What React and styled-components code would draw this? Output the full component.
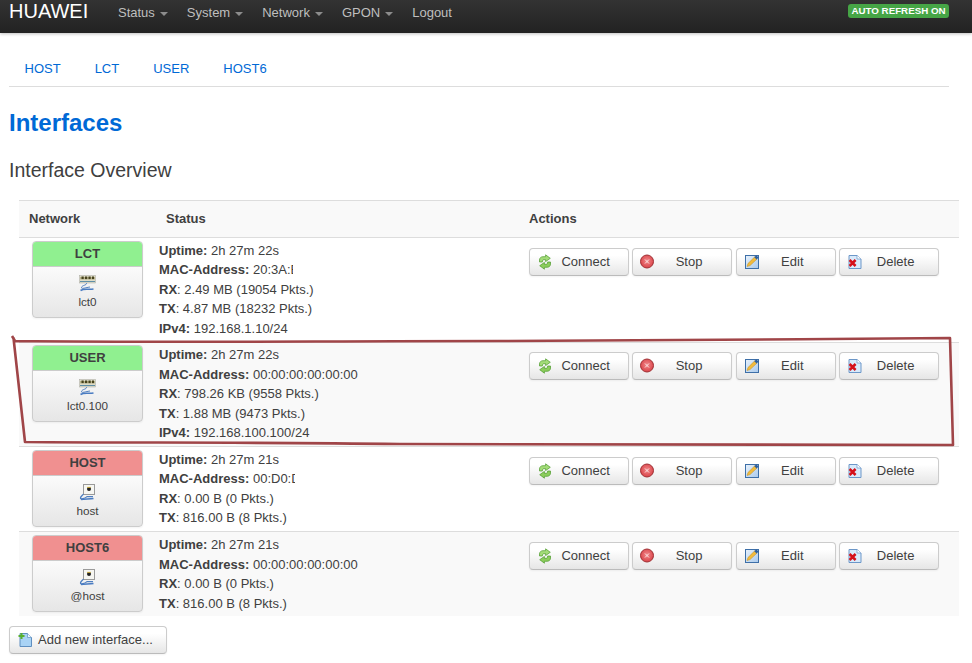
import React from "react";
import styled, { createGlobalStyle } from "styled-components";

const Global = createGlobalStyle`
  html, body { margin: 0; padding: 0; background: #fff; }
  body { font-family: "Liberation Sans", Arial, sans-serif; font-size: 13px; color: #404040; line-height: 19.5px; }
  * { box-sizing: border-box; }
`;

const Page = styled.div`position: relative; width: 972px; height: 663px; overflow: hidden;`;

const Navbar = styled.header`
  height: 33px; display: flex; align-items: flex-start; padding: 0 23px 0 9px;
  background: linear-gradient(#333333, #222222);
  box-shadow: 0 1px 3px rgba(0,0,0,.25);
`;
const Brand = styled.div`font-size: 20px; line-height: 22px; color: #fff; width: 109px;`;
const NavItem = styled.div`
  font-size: 13px; line-height: 26px; color: #bfbfbf; display: flex; align-items: center; margin-right: 19px;
`;
const Caret = styled.span`
  width: 0; height: 0; margin-left: 5px; margin-top: 1px; border-left: 4px solid transparent; border-right: 4px solid transparent; border-top: 4px solid #8c8c8c;
`;
const Spacer = styled.div`flex: 1;`;
const Refresh = styled.div`
  margin-top: 4px; height: 14px; width: 101px; border-radius: 3px; background: #46a546; color: #fff;
  font-size: 9.75px; font-weight: bold; line-height: 14px; text-align: center; white-space: nowrap;
`;

const Main = styled.main`padding: 0 23px 0 9px;`;
const Tabs = styled.nav`margin-top: 17px; height: 37px; border-bottom: 1px solid #ddd; display: flex; padding-left: 15.5px; gap: 34px;`;
const Tab = styled.a`color: #0069d6; font-size: 13px; line-height: 38px;`;
const Title = styled.h1`margin: 18px 0 0; color: #0069d6; font-size: 24px; font-weight: bold; line-height: 36px;`;
const Subtitle = styled.h2`margin: 14px 0 0; color: #404040; font-size: 19.5px; font-weight: normal; line-height: 30px;`;

const Table = styled.section`margin: 15px -10px 0 10px; width: 940px;`;
const HeaderRow = styled.div`
  display: grid; grid-template-columns: 137px 363px 1fr; height: 37px; background: #f9f9f9; border-top: 1px solid #ddd;
  font-weight: bold; line-height: 35px; padding-left: 10px;
`;
const HeaderCell = styled.div``;
const Row = styled.div`
  display: grid; grid-template-columns: 137px 363px 1fr; border-top: 1px solid #ddd; padding: 3px 0;
  background: ${p => (p.$alt ? "#f9f9f9" : "#fff")};
  & > * { margin: ${p => (p.$lift ? "-0.1px 0 0.1px" : "0")}; }
`;
const BadgeCell = styled.div`padding-left: 13px;`;
const Badge = styled.div`
  width: 111px; height: 77px; border: 1px solid #ccc; border-radius: 4px; overflow: hidden;
  background: linear-gradient(#ffffff 20%, #e6e6e6);
  box-shadow: 0 1px 2px rgba(0,0,0,.05); text-align: center;
`;
const BadgeHead = styled.div`
  height: 25px; line-height: 24px; font-weight: bold; border-bottom: 1px solid #ccc; background: ${p => (p.$up ? "#90f090" : "#f09090")};
`;
const BadgeIcon = styled.div`height: 17px; margin-top: 8px; display: flex; justify-content: center;`;
const BadgeLabel = styled.div`font-size: 11.7px; line-height: 18px; margin-top: 1px; color: #404040;`;
const StatusCell = styled.div`padding-left: 3px;`;
const Line = styled.div`white-space: nowrap; height: 19.5px;`;
const Mask = styled.span`display: inline-block; overflow: hidden; vertical-align: top; width: ${p => p.$w}px;`;
const Actions = styled.div`display: flex; align-items: flex-start; padding: 7px 0 0 10px; gap: 3.3px;`;
const Btn = styled.button`
  position: relative; width: 100px; height: 28px; padding: 0 10.6px 1.2px 24px;
  font: 13px "Liberation Sans", Arial, sans-serif; color: #404040; text-align: center;
  border: 1px solid #ccc; border-bottom-color: #bbb; border-radius: 4px;
  background: linear-gradient(#ffffff 25%, #e6e6e6);
  box-shadow: inset 0 1px 0 rgba(255,255,255,.2), 0 1px 2px rgba(0,0,0,.05);
  display: flex; align-items: center; justify-content: center;
`;
const BtnIcon = styled.svg`position: absolute; left: 7px; top: 5px;`;
const AddBtn = styled(Btn)`
  width: 158px; margin: 10px 0 0; padding: 0 0 1.2px 28px; justify-content: flex-start;
`;
const Annotation = styled.svg`position: absolute; left: 0; top: 0; pointer-events: none;`;

const Reload = () => (
  <BtnIcon width="16" height="16" viewBox="0 0 16 16">
    <path d="M2.5 8 V6 C2.5 4 4 2.7 6 2.7 H8.6 V0.8 L13.3 4.3 L8.6 7.6 V5.7 H6.8 C5.7 5.7 5.4 6.8 5.4 8 Z" fill="#a3dc78" stroke="#4c9a2a" strokeWidth=".7" strokeLinejoin="round" />
    <path d="M13.5 8 V10 C13.5 12 12 13.3 10 13.3 H7.4 V15.2 L2.7 11.7 L7.4 8.4 V10.3 H9.2 C10.3 10.3 10.6 9.2 10.6 8 Z" fill="#8ccd5c" stroke="#4c9a2a" strokeWidth=".7" strokeLinejoin="round" />
  </BtnIcon>
);
const Reset = () => (
  <BtnIcon width="16" height="16" viewBox="0 0 16 16">
    <defs>
      <radialGradient id="stopFill" cx=".5" cy=".45" r=".6">
        <stop offset="0" stopColor="#f08a8c" />
        <stop offset="1" stopColor="#d83c42" />
      </radialGradient>
    </defs>
    <circle cx="7" cy="7.5" r="6.5" fill="url(#stopFill)" stroke="#9f3034" strokeWidth="1" />
    <path d="M5 5.5 L9 9.5 M9 5.5 L5 9.5" stroke="#fde4e4" strokeWidth="1" />
  </BtnIcon>
);
const EditI = () => (
  <BtnIcon width="16" height="16" viewBox="0 0 16 16">
    <defs>
      <linearGradient id="editFill" x1="0" y1="0" x2="1" y2="1">
        <stop offset="0" stopColor="#e8f2fc" />
        <stop offset="1" stopColor="#a9c9ec" />
      </linearGradient>
    </defs>
    <rect x="1.5" y="1.5" width="13" height="13" fill="url(#editFill)" stroke="#3d6fa8" />
    <path d="M3 12.5 L4 9.5 L10.8 2.8 L13 5 L6 11.6 Z" fill="#f2bb3c" stroke="#c08a18" strokeWidth=".5" />
    <path d="M10.3 3.2 L12.2 1.2 L14.6 3.6 L12.6 5.5 Z" fill="#2f5f9c" />
  </BtnIcon>
);
const Remove = () => (
  <BtnIcon width="16" height="16" viewBox="0 0 16 16">
    <path d="M2 1.5 H10 L14 5 V14.5 H2 Z" fill="#d8eafb" stroke="#6c97c8" />
    <path d="M10 1.5 V5 H14" fill="#fff" stroke="#6c97c8" strokeWidth=".7" />
    <path d="M2.6 6 L8.6 12 M8.6 6 L2.6 12" stroke="#d5101a" strokeWidth="2.5" />
  </BtnIcon>
);
const AddI = () => (
  <BtnIcon width="16" height="16" viewBox="0 0 16 16">
    <path d="M3 1.5 H10.5 L14.5 5.5 V14.5 H3 Z" fill="#a9d3f5" stroke="#5f8fc0" />
    <path d="M10.5 1.5 V5.5 H14.5" fill="#eaf5ff" stroke="#5f8fc0" strokeWidth=".7" />
    <path d="M4.5 1 V7 M1.5 4 H7.5" stroke="#58b030" strokeWidth="2" />
  </BtnIcon>
);
const SwitchIcon = () => (
  <svg width="17" height="17" viewBox="0 0 17 17">
    <rect x="0.5" y="0.5" width="16" height="7.5" fill="#dedcc8" stroke="#a8a8a0" strokeWidth=".5" />
    <rect x="1" y="2" width="15" height="2.4" fill="#b9b38a" />
    <rect x="2.5" y="1.5" width="2.2" height="2.6" fill="#45421e" />
    <rect x="6" y="1.5" width="2.2" height="2.6" fill="#45421e" />
    <rect x="9.5" y="1.5" width="2.2" height="2.6" fill="#45421e" />
    <rect x="13" y="1.5" width="2" height="2.6" fill="#45421e" />
    <path d="M1 6.5 H16" stroke="#5f8fa8" />
    <path d="M7.5 8 C8 10.5 3 10 2.5 12.5 C2.2 14.5 7 12.5 11 12" fill="none" stroke="#4f7fc0" strokeWidth="1" />
    <path d="M1.5 15.5 C5 13.2 9 14.8 14.5 14" fill="none" stroke="#4a7cc2" strokeWidth="1.6" />
  </svg>
);
const HostIcon = () => (
  <svg width="17" height="17" viewBox="0 0 17 17">
    <rect x="4.5" y="0.5" width="11" height="10" fill="#f6f6f2" stroke="#9a9a9a" />
    <circle cx="10" cy="5" r="2" fill="#222" />
    <path d="M8.2 3.4 H11.8" stroke="#c9a83a" />
    <path d="M4.5 10 C3.5 11.5 1.5 12.5 1.5 14 C1.5 15.8 6 14.5 8 12.6 H14" fill="none" stroke="#4f7fc0" strokeWidth="1.3" />
    <path d="M2 15.5 C6 14.5 10 15.3 14.5 14.4" fill="none" stroke="#4a7cc2" strokeWidth="1.5" />
  </svg>
);

const rows = [
  { n: "LCT", up: true, lift: true, dev: "lct0", icon: "s", time: "2h 27m 22s", mac: "20:3A:EB:00:00:00", w: 40.5, rx: "2.49 MB (19054 Pkts.)", tx: "4.87 MB (18232 Pkts.)", ip: "192.168.1.10/24" },
  { n: "USER", up: true, lift: true, alt: true, dev: "lct0.100", icon: "s", time: "2h 27m 22s", mac: "00:00:00:00:00:00", rx: "798.26 KB (9558 Pkts.)", tx: "1.88 MB (9473 Pkts.)", ip: "192.168.100.100/24" },
  { n: "HOST", lift: true, dev: "host", icon: "h", time: "2h 27m 21s", mac: "00:D0:D0:00:00:00", w: 42, rx: "0.00 B (0 Pkts.)", tx: "816.00 B (8 Pkts.)" },
  { n: "HOST6", alt: true, dev: "@host", icon: "h", time: "2h 27m 21s", mac: "00:00:00:00:00:00", rx: "0.00 B (0 Pkts.)", tx: "816.00 B (8 Pkts.)" },
];

export default function App() {
  return (
    <Page>
      <Global />
      <Navbar>
        <Brand>HUAWEI</Brand>
        <NavItem>Status<Caret /></NavItem>
        <NavItem>System<Caret /></NavItem>
        <NavItem>Network<Caret /></NavItem>
        <NavItem>GPON<Caret /></NavItem>
        <NavItem>Logout</NavItem>
        <Spacer />
        <Refresh>AUTO REFRESH ON</Refresh>
      </Navbar>
      <Main>
        <Tabs>
          <Tab>HOST</Tab><Tab>LCT</Tab><Tab>USER</Tab><Tab>HOST6</Tab>
        </Tabs>
        <Title>Interfaces</Title>
        <Subtitle>Interface Overview</Subtitle>
        <Table>
          <HeaderRow>
            <HeaderCell>Network</HeaderCell>
            <HeaderCell>Status</HeaderCell>
            <HeaderCell>Actions</HeaderCell>
          </HeaderRow>
          {rows.map(r => (
            <Row key={r.n} $alt={r.alt} $lift={r.lift}>
              <BadgeCell>
                <Badge>
                  <BadgeHead $up={r.up}>{r.n}</BadgeHead>
                  <BadgeIcon>{r.icon === "s" ? <SwitchIcon /> : <HostIcon />}</BadgeIcon>
                  <BadgeLabel>{r.dev}</BadgeLabel>
                </Badge>
              </BadgeCell>
              <StatusCell>
                <Line><b>Uptime:</b> {r.time}</Line>
                <Line><b>MAC-Address:</b> {r.w ? <Mask $w={r.w}>{r.mac}</Mask> : r.mac}</Line>
                <Line><b>RX</b>: {r.rx}</Line>
                <Line><b>TX</b>: {r.tx}</Line>
                {r.ip && <Line><b>IPv4:</b> {r.ip}</Line>}
              </StatusCell>
              <Actions>
                <Btn><Reload />Connect</Btn>
                <Btn><Reset />Stop</Btn>
                <Btn><EditI />Edit</Btn>
                <Btn><Remove />Delete</Btn>
              </Actions>
            </Row>
          ))}
        </Table>
        <AddBtn><AddI />Add new interface...</AddBtn>
      </Main>
      <Annotation width="972" height="663" viewBox="0 0 972 663">
        <path d="M12 336 L15 341 C200 343 300 341 500 341 C650 341 800 339 950 338 C951 370 952 410 953 445 C800 443 600 446 400 444 C250 442 120 443 25 442 L13.5 338" fill="none" stroke="#a04548" strokeWidth="2.6" strokeLinejoin="round" />
      </Annotation>
    </Page>
  );
}
